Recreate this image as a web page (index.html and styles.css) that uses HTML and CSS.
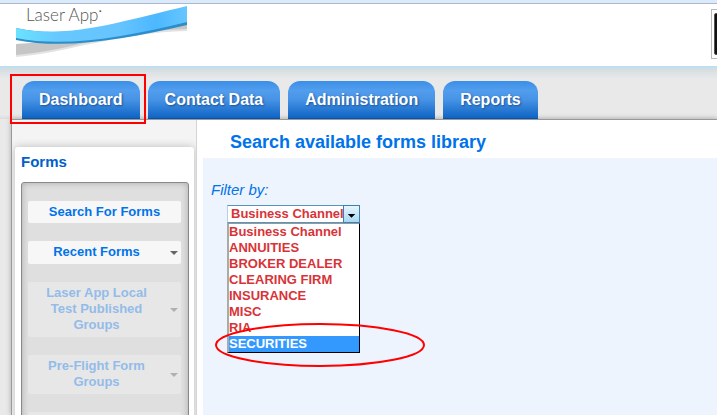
FILE: index.html
```html
<!DOCTYPE html>
<html lang="en">
<head>
  <meta charset="utf-8">
  <title>Laser App</title>
  <link rel="stylesheet" href="styles.css">
</head>
<body>
  <header class="header">
    <svg class="logo" viewBox="0 0 171 52" role="img" aria-label="Laser App">
      <defs>
        <linearGradient id="wave" x1="0" x2="1" y1="0" y2="0">
          <stop offset="0" stop-color="#6be2ff"/>
          <stop offset=".25" stop-color="#66c8ff"/>
          <stop offset=".6" stop-color="#66c4ff"/>
          <stop offset=".82" stop-color="#4cb8ff"/>
          <stop offset="1" stop-color="#66c6ff"/>
        </linearGradient>
      </defs>
      <path d="M0 38 C50 36 110 19 171 18 V25 C105 26 50 47 0 51 Z" fill="#e2e2e2"/>
      <path d="M0 38 C50 36 110 19 171 18 V23 C105 24 50 45 0 49 Z" fill="#c6c6c6"/>
      <path d="M0 22 C50 33 100 19 171 1 V19 C110 33 50 44 0 34 Z" fill="#2b8dc9"/>
      <path d="M0 22 C50 33 100 17 171 0 V16 C110 31 50 42 0 32 Z" fill="url(#wave)"/>
    </svg>
    <span class="brand">Laser App<sup>•</sup></span>
    <div class="avatar"><div class="photo"></div></div>
  </header>

  <nav class="tabs">
    <a class="tab marked" href="#dashboard">Dashboard</a>
    <a class="tab" href="#contacts">Contact Data</a>
    <a class="tab" href="#admin">Administration</a>
    <a class="tab" href="#reports">Reports</a>
  </nav>

  <div class="page">
    <aside class="sidebar">
      <div class="card">
        <h2>Forms</h2>
        <div class="menu">
          <button type="button">Search For Forms</button>
          <button type="button" class="more">Recent Forms</button>
          <button type="button" class="more" disabled>Laser App Local Test Published Groups</button>
          <button type="button" class="more" disabled>Pre-Flight Form Groups</button>
          <button type="button" class="more" disabled aria-label="More groups"></button>
        </div>
      </div>
    </aside>

    <main class="content">
      <h1>Search available forms library</h1>
      <form class="filter">
        <label for="channel">Filter by:</label>
        <div class="dropdown">
          <div class="closed">
            <select id="channel">
              <option>Business Channel</option>
            </select>
            <svg class="arrow" viewBox="0 0 16 16" aria-hidden="true">
              <path d="M4 8h8l-4 4z" fill="#000"/>
            </svg>
          </div>
          <select class="options" size="8" aria-label="Business Channel">
            <option>Business Channel</option>
            <option>ANNUITIES</option>
            <option>BROKER DEALER</option>
            <option>CLEARING FIRM</option>
            <option>INSURANCE</option>
            <option>MISC</option>
            <option>RIA</option>
            <option selected>SECURITIES</option>
          </select>
          <svg class="circle" viewBox="0 0 210 46" aria-hidden="true">
            <ellipse cx="105" cy="23" rx="104" ry="21" fill="none" stroke="#f00" stroke-width="2"/>
          </svg>
        </div>
      </form>
    </main>
  </div>
</body>
</html>
```
FILE: styles.css
```css
* {
  box-sizing: border-box;
}
body {
  display: flex;
  flex-direction: column;
  height: 100vh;
  margin: 0;
  overflow: hidden;
  background: #e9e9e9;
  font-family: "Liberation Sans", Arial, sans-serif;
}

/* header */
.header {
  position: relative;
  display: flex;
  flex: none;
  justify-content: space-between;
  height: 67px;
  padding-left: 16px;
  overflow: hidden;
  border-top: 3px solid #dbe9f9;
  border-bottom: 1px solid #aee0ff;
  background: #fff;
  box-shadow: inset 0 1px #a9b9d3;
}
.logo {
  width: 171px;
  height: 52px;
  margin-top: 3px;
}
.brand {
  position: absolute;
  top: 2px;
  left: 26px;
  color: #555;
  font: 300 17px/20px Lato, sans-serif;
}
.brand sup {
  font-size: 6px;
  line-height: 0;
  vertical-align: 8px;
}
.avatar {
  width: 50px;
  height: 50px;
  margin: 6px -44px 0 0;
  padding: 3px 2px;
  border: 1px solid #bbb;
}
.photo {
  height: 42px;
  border: 1px solid #555;
  border-radius: 2px;
  background: #111;
}

/* tabs */
.tabs {
  display: flex;
  flex: none;
  gap: 8px;
  padding: 14px 22px 0;
  background: linear-gradient(#d0dbe0, #e9e9e9 12px, #e9e9e9 48px, #dcdcdc);
}
.tab {
  position: relative;
  height: 38px;
  padding: 0 17px;
  border-bottom: 1px solid #0a52a8;
  border-radius: 12px 12px 0 0;
  background: linear-gradient(#3a8fe8, #529ded 25%, #4793e6 50%, #0f64c4);
  color: #fff;
  font-size: 16px;
  font-weight: bold;
  line-height: 37px;
  text-decoration: none;
  text-shadow: 1px 1px 2px #1a5296;
}
.marked::after {
  content: "";
  position: absolute;
  z-index: 1;
  inset: -7px -6px -6px -12px;
  border: 2px solid #f00;
}

/* page */
.page {
  display: flex;
  flex: 1;
  min-height: 0;
  margin-left: 11px;
  border-top: 1px solid #999;
  border-left: 1px solid #999;
  background: #fff;
  box-shadow: 0 0 5px #aaa;
}
.sidebar {
  flex: none;
  width: 185px;
  padding: 27px 2px 0 3px;
  overflow: hidden;
  border-right: 1px solid #d4d4d4;
  background: #f4f4f4;
}
.card {
  padding: 6px 5px 6px 6px;
  border-radius: 3px;
  background: #fff;
  box-shadow: 0 0 8px #bbb;
}
.card h2 {
  margin: 0 0 11px;
  color: #0060cc;
  font-size: 15px;
  line-height: 18px;
}
.menu {
  display: flex;
  flex-direction: column;
  gap: 18px;
  padding: 18px 7px 18px 6px;
  border: 1px solid #888;
  border-radius: 3px;
  background: #dfdfdf;
  box-shadow: inset 0 0 6px #aaa;
}
.menu button {
  position: relative;
  min-height: 22px;
  padding: 3px 15px;
  border: 0;
  border-radius: 2px;
  background: #f7f7f7;
  color: #0073ea;
  font: bold 13px/16px "Liberation Sans", Arial, sans-serif;
}
.menu .more {
  padding: 3px 31px 4px 15px;
}
.menu .more::after {
  content: "";
  position: absolute;
  top: calc(50% - 2px);
  right: 3px;
  border: 4px solid transparent;
  border-top-color: #666;
  border-bottom: 0;
}
.menu button:disabled {
  background: #e7e7e7;
  color: #93bce9;
}
.menu button:disabled::after {
  border-top-color: #b0b0b0;
}

/* content */
.content {
  flex: 1;
  display: flex;
  flex-direction: column;
  padding-left: 6px;
}
.content h1 {
  margin: 0;
  padding: 12px 27px 6px;
  color: #0073ea;
  font-size: 18px;
  line-height: 20px;
}
.filter {
  flex: 1;
  padding: 23px 8px;
  background: #edf4fd;
}
.filter label {
  display: block;
  color: #0073ea;
  font-size: 15px;
  font-style: italic;
  line-height: 18px;
}
.dropdown {
  position: relative;
  width: 133px;
  margin: 6px 16px;
}
.closed {
  position: relative;
}
.dropdown select {
  display: block;
  width: 100%;
  margin: 0;
  outline: 0;
  border-radius: 0;
  appearance: none;
  background: #fff;
  color: #d93338;
  font: bold 13px/16px "Liberation Sans", Arial, sans-serif;
}
#channel {
  height: 18px;
  padding: 0 0 0 3px;
  border: 1px solid #5794bf;
  border-left-color: #b5cfe7;
}
.arrow {
  position: absolute;
  top: 0;
  right: 0;
  width: 17px;
  height: 18px;
  border: 1px solid #3c7fb1;
  background: linear-gradient(#e8f6fd, #a5d8f5);
  pointer-events: none;
}
.dropdown .options {
  height: 130px;
  padding: 0;
  overflow: hidden;
  border: 1px solid #000;
  border-top-color: #999;
  border-left: 2px solid #aaa;
}
.options option {
  height: 16px;
  min-height: 16px;
  padding: 0;
  font-weight: bold;
  line-height: 16px;
}
.options option:checked {
  background: linear-gradient(#39f, #39f);
  color: #fff !important;
}
.circle {
  position: absolute;
  top: 117px;
  left: -12px;
  width: 210px;
  height: 46px;
  pointer-events: none;
}
```
